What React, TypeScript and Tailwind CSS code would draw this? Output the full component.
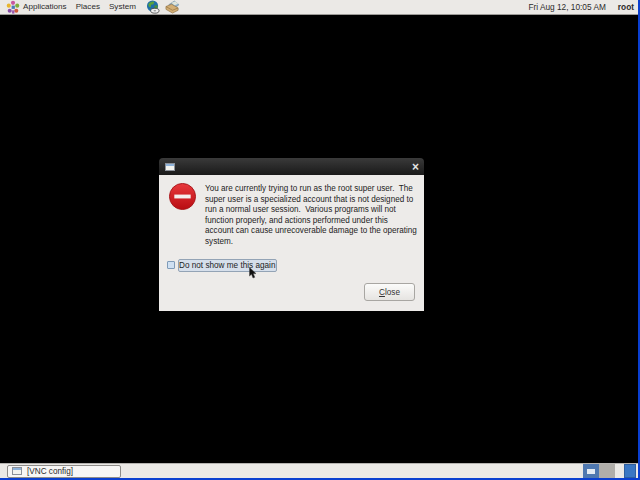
const font = { fontFamily: '"Liberation Sans", Arial, sans-serif' };

const message = [
  "You are currently trying to run as the root super user.\u00a0 The",
  "super user is a specialized account that is not designed to",
  "run a normal user session.\u00a0 Various programs will not",
  "function properly, and actions performed under this",
  "account can cause unrecoverable damage to the operating",
  "system.",
];

function FootIcon() {
  return (
    <svg width="16" height="15" viewBox="0 0 16 16">
      <circle cx="8" cy="3" r="2.2" fill="#c9579f" />
      <circle cx="3.5" cy="6" r="2.2" fill="#e8b52e" />
      <circle cx="12.5" cy="6" r="2.2" fill="#7fae3c" />
      <circle cx="4.5" cy="11.5" r="2.2" fill="#8a4fa8" />
      <circle cx="11.5" cy="11.5" r="2.2" fill="#d05a3c" />
      <rect x="6.5" y="6" width="3.5" height="3.5" fill="#4d7bb8" />
      <rect x="7" y="11" width="2.5" height="3.5" fill="#9a5bb0" />
    </svg>
  );
}

function GlobeIcon() {
  return (
    <svg width="14" height="14" viewBox="0 0 15 15">
      <circle cx="7" cy="6.5" r="6" fill="#1f6fa8" />
      <path d="M2.5 4.5 C4 2 7 1 9 2 L8 4.5 L5.5 5 L5 8 L3 7 Z" fill="#5aa33c" />
      <path d="M9 6 L12.5 5.5 L12 9 L9.5 10 Z" fill="#4c8f38" />
      <ellipse cx="9.5" cy="11.5" rx="4.5" ry="2.6" fill="#f1f1f1" stroke="#333" strokeWidth="0.8" />
      <ellipse cx="9.5" cy="11.5" rx="1.5" ry="0.8" fill="#999" />
    </svg>
  );
}

function MailIcon() {
  return (
    <svg width="15" height="14" viewBox="0 0 16 15">
      <path d="M4 5 L10 1 L15 5 L10 9 Z" fill="#8fb0c9" stroke="#6f8899" strokeWidth="0.5" />
      <path d="M7 3 L11 1.5 L14 4 L10 6 Z" fill="#dfe6dc" />
      <path d="M1 7 L7 4.5 L14 8.5 L14 11 L8 14 L1 10 Z" fill="#d3ae74" stroke="#8f7040" strokeWidth="0.7" />
      <path d="M1 7 L8 11 L14 8.5" fill="none" stroke="#8f7040" strokeWidth="0.7" />
    </svg>
  );
}

function WindowIcon() {
  return (
    <span className="flex h-[8px] w-[10px] flex-col border border-[#8b9098] bg-[#f3f3ef]">
      <span className="h-[2px] bg-[#8fb3da]" />
    </span>
  );
}

function StopIcon() {
  return (
    <svg width="27" height="27" viewBox="0 0 28 28">
      <defs>
        <linearGradient id="stop" x1="0" y1="0" x2="0" y2="1">
          <stop offset="0" stopColor="#e8393d" />
          <stop offset="1" stopColor="#b80c12" />
        </linearGradient>
      </defs>
      <circle cx="14" cy="14" r="13.5" fill="url(#stop)" stroke="#a8161a" strokeWidth="1" />
      <rect x="5.5" y="12" width="17" height="4" fill="#f4eeee" />
    </svg>
  );
}

function CursorIcon() {
  return (
    <svg width="8" height="12" viewBox="0 0 8 12" className="absolute left-[70px] top-[7px]">
      <path d="M0.5 0.5 L0.5 9 L2.5 7.2 L4 11 L5.8 10.2 L4.3 6.8 L7 6.6 Z" fill="#111" stroke="#444" strokeWidth="0.5" />
    </svg>
  );
}

function Dialog() {
  return (
    <div className="absolute left-[159px] top-[158px] flex h-[153px] w-[265px] flex-col">
      <div className="flex h-[17px] shrink-0 items-center justify-between rounded-t-[4px] bg-gradient-to-b from-[#3a3a3a] to-[#1a1a1a] pl-[6px] pr-[5px]">
        <WindowIcon />
        <span className="text-[12px] font-bold leading-none text-[#e4e4e4]">×</span>
      </div>
      <div className="flex flex-1 flex-col bg-[#edebe9] pl-[8px] pr-[9px] pt-[8px]">
        <div className="flex">
          <div className="ml-[2px] w-[36px] shrink-0">
            <StopIcon />
          </div>
          <div className="whitespace-nowrap pt-[1px] text-[8.15px] leading-[10.6px] text-[#1d1d1d]">
            {message.map((line) => (
              <div key={line}>{line}</div>
            ))}
          </div>
        </div>
        <div className="mt-[11px] flex items-center gap-[3px]">
          <span className="h-[8px] w-[8px] rounded-[1px] border border-[#7f9bb8] bg-[#cfe0f2]" />
          <div className="relative flex h-[13px] w-[99px] items-center whitespace-nowrap rounded-[2px] border border-[#93a3b5] bg-[#d6dfeb] pt-[2px] text-[8.2px] text-[#1d1d1d]">
            Do not show me this again
            <CursorIcon />
          </div>
        </div>
        <div className="mt-[11px] flex justify-end">
          <button className="flex h-[18px] w-[51px] items-center justify-center rounded-[3px] border border-[#a8a6a2] bg-gradient-to-b from-[#fbfbfa] to-[#e6e4e1] pt-[3px] text-[8.2px] text-[#333]">
            <span><span className="underline">C</span>lose</span>
          </button>
        </div>
      </div>
    </div>
  );
}

export default function App() {
  return (
    <div className="relative flex h-[480px] w-[640px] flex-col overflow-hidden bg-black" style={font}>
      <div className="flex h-[15px] shrink-0 items-center whitespace-nowrap border-b border-[#9c9a97] bg-[#ebe9e6] pr-[6px] text-[8.3px] text-[#2b2b2b]">
        <span className="ml-[5px]"><FootIcon /></span>
        <span className="ml-[2px] pt-[1px] text-[8.1px]">Applications</span>
        <span className="ml-[9px] pt-[1px] text-[8.1px]">Places</span>
        <span className="ml-[9px] pt-[1px] text-[8.1px]">System</span>
        <span className="ml-[10px]"><GlobeIcon /></span>
        <span className="ml-[5px]"><MailIcon /></span>
        <span className="ml-auto pt-[1px]">Fri Aug 12, 10:05 AM</span>
        <span className="ml-[12px] pt-[1px] font-bold">root</span>
      </div>
      <div className="flex-1">
        <Dialog />
      </div>
      <div className="flex h-[17px] shrink-0 items-center border-t border-[#b5b3b0] bg-[#ebe9e6] pb-[2px] pl-[7px] pr-[4px]">
        <div className="flex h-[13px] w-[114px] items-center gap-[5px] whitespace-nowrap rounded-[2px] border border-[#8e8c89] bg-[#f7f6f5] pl-[4px] text-[8.2px] text-[#2b2b2b]">
          <WindowIcon />
          <span className="pt-[2px]">[VNC config]</span>
        </div>
        <div className="ml-auto flex h-[14px] w-[16px] items-center justify-center bg-[#4f78b0]">
          <span className="h-[5px] w-[8px] bg-[#e4ebf3]" />
        </div>
        <div className="h-[14px] w-[16px] bg-[#b0aeaa]" />
        <div className="ml-[9px] h-[14px] w-[12px] border border-[#2f5f9f] bg-[#3a77c4]" />
      </div>
      <div className="absolute bottom-0 left-0 h-[2px] w-[640px] bg-[#0a3fd0]" />
      <div className="absolute right-0 top-0 h-[480px] w-[2px] bg-[#0a3fd0]" />
    </div>
  );
}
